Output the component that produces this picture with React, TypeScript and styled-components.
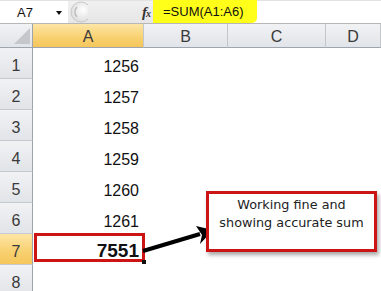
import React from 'react';
import styled, { createGlobalStyle, css } from 'styled-components';

const GlobalStyle = createGlobalStyle`
  html, body {
    margin: 0;
    padding: 0;
    background: #fff;
  }
`;

const Sheet = styled.div`
  position: relative;
  width: 381px;
  height: 291px;
  overflow: hidden;
  background: #fff;
  font-family: 'Liberation Sans', Arial, sans-serif;
  display: flex;
  flex-direction: column;
`;

const FormulaBar = styled.div`
  display: flex;
  height: 24px;
  border-top: 1px solid #e2e2e2;
  border-bottom: 1px solid #b7b7b7;
  background: #fff;
`;

const NameBox = styled.div`
  width: 68px;
  display: flex;
  align-items: center;
  justify-content: space-between;
  padding: 0 6px 0 17px;
  box-sizing: border-box;
  font-size: 13px;
  color: #111;
`;

const Caret = styled.span`
  width: 0;
  height: 0;
  border-left: 3.5px solid transparent;
  border-right: 3.5px solid transparent;
  border-top: 4px solid #111;
  margin-top: 2px;
`;

const ButtonArea = styled.div`
  width: 85px;
  display: flex;
  align-items: center;
  justify-content: space-between;
  background: linear-gradient(#f0f0f0, #e6e6e6);
  padding-right: 3px;
  box-sizing: border-box;
`;

const Fx = styled.span`
  font-family: 'Liberation Serif', 'Times New Roman', serif;
  font-style: italic;
  font-weight: bold;
  font-size: 15px;
  color: #333;
  letter-spacing: -1px;

  small {
    font-size: 10px;
  }
`;

const FormulaInput = styled.div`
  flex: 1;
  display: flex;
`;

const Highlight = styled.span`
  width: 104px;
  box-sizing: border-box;
  background: #ffff1a;
  padding-left: 10px;
  display: flex;
  align-items: center;
  font-size: 13px;
  color: #111;
  border-radius: 0 0 5px 0;
  margin-top: -1px;
`;

const Strip = styled.div`
  height: 2px;
  background: #ececec;
`;

const Grid = styled.div`
  display: grid;
  grid-template-columns: 33px 111px 84px 98px 1fr;
  grid-template-rows: 24px repeat(8, 31px);
`;

const headerBase = css<{ $selected?: boolean }>`
  display: flex;
  align-items: center;
  justify-content: center;
  font-size: 16px;
  color: #3a3a3a;
  box-sizing: border-box;
  background: ${(p) =>
    p.$selected
      ? 'linear-gradient(#fde6a6, #f8d06f 60%, #f5c65c)'
      : 'linear-gradient(#f1f2f4, #e1e4e8)'};
`;

const ColHeader = styled.div<{ $selected?: boolean }>`
  ${headerBase};
  border-right: 1px solid #c3c7cc;
  border-bottom: 1px solid #9ea4ab;
  padding-top: 2px;
`;

const RowHeader = styled.div<{ $selected?: boolean }>`
  ${headerBase};
  align-items: flex-end;
  padding-bottom: 3px;
  line-height: 18px;
  border-right: 1px solid #9ea4ab;
  border-bottom: 1px solid #c6cacf;
`;

const Corner = styled.div`
  display: flex;
  align-items: flex-end;
  justify-content: flex-end;
  padding: 0 2px 3px 0;
  box-sizing: border-box;
  background: linear-gradient(#f1f2f4, #e1e4e8);
  border-right: 1px solid #9ea4ab;
  border-bottom: 1px solid #9ea4ab;
`;

const Cell = styled.div<{ $bold?: boolean; $selected?: boolean }>`
  position: relative;
  display: flex;
  align-items: flex-end;
  justify-content: flex-end;
  padding: 0 5px ${(p) => (p.$bold ? '5px' : '3px')} 0;
  line-height: 18px;
  font-size: ${(p) => (p.$bold ? '19px' : '16px')};
  font-weight: ${(p) => (p.$bold ? 'bold' : 'normal')};
  color: #111;

  ${(p) =>
    p.$selected &&
    css`
      &::before {
        content: '';
        position: absolute;
        left: 1px;
        top: -1px;
        right: -1px;
        bottom: 3px;
        border: 3px solid #cc1414;
      }
      &::after {
        content: '';
        position: absolute;
        right: -2px;
        bottom: 1px;
        width: 4px;
        height: 4px;
        background: #111;
      }
    `}
`;

const Callout = styled.div`
  position: absolute;
  left: 206px;
  top: 191px;
  width: 171px;
  height: 61px;
  box-sizing: border-box;
  border: 3px solid #cc1414;
  background: #fff;
  box-shadow: 2px 3px 4px rgba(0, 0, 0, 0.35);
  font-family: 'DejaVu Sans', Verdana, sans-serif;
  font-size: 12.8px;
  line-height: 18px;
  color: #222;
  text-align: center;
  padding-top: 2px;
`;

const Overlay = styled.svg`
  position: absolute;
  left: 0;
  top: 0;
  pointer-events: none;
`;

const columns = ['A', 'B', 'C', 'D'];
const values = ['1256', '1257', '1258', '1259', '1260', '1261'];

export default function App() {
  const rows = Array.from({ length: 8 }, (_, i) => i + 1);
  return (
    <>
      <GlobalStyle />
      <Sheet>
        <FormulaBar>
          <NameBox>
            A7
            <Caret />
          </NameBox>
          <ButtonArea>
            <svg width="20" height="22" viewBox="0 0 20 22">
              <defs>
                <radialGradient id="knob" cx="0.6" cy="0.4" r="0.7">
                  <stop offset="0" stopColor="#ffffff" />
                  <stop offset="1" stopColor="#d9d9d9" />
                </radialGradient>
              </defs>
              <circle cx="13" cy="11" r="10" fill="url(#knob)" stroke="#c9c9c9" strokeWidth="1" />
              <path d="M9 6 A7 7 0 0 0 9 16" fill="none" stroke="#bdbdbd" strokeWidth="1.5" />
            </svg>
            <Fx>
              f<small>x</small>
            </Fx>
          </ButtonArea>
          <FormulaInput>
            <Highlight>=SUM(A1:A6)</Highlight>
          </FormulaInput>
        </FormulaBar>
        <Strip />
        <Grid>
          <Corner>
            <svg width="16" height="16" viewBox="0 0 16 16">
              <polygon points="16,0 16,16 0,16" fill="#c4c7cb" />
            </svg>
          </Corner>
          {columns.map((c) => (
            <ColHeader key={c} $selected={c === 'A'}>
              {c}
            </ColHeader>
          ))}
          {rows.map((r) => (
            <React.Fragment key={r}>
              <RowHeader $selected={r === 7}>{r}</RowHeader>
              {columns.map((c) => {
                if (c !== 'A') return <Cell key={c} />;
                if (r === 7)
                  return (
                    <Cell key={c} $bold $selected>
                      7551
                    </Cell>
                  );
                return <Cell key={c}>{values[r - 1] ?? ''}</Cell>;
              })}
            </React.Fragment>
          ))}
        </Grid>
        <Overlay width="381" height="291" viewBox="0 0 381 291">
          <line x1="143" y1="251" x2="200" y2="234" stroke="#000" strokeWidth="4" />
          <polygon points="213,230 200,244 202,235 196,226" fill="#000" />
        </Overlay>
        <Callout>
          Working fine and
          <br />
          showing accurate sum
        </Callout>
      </Sheet>
    </>
  );
}
